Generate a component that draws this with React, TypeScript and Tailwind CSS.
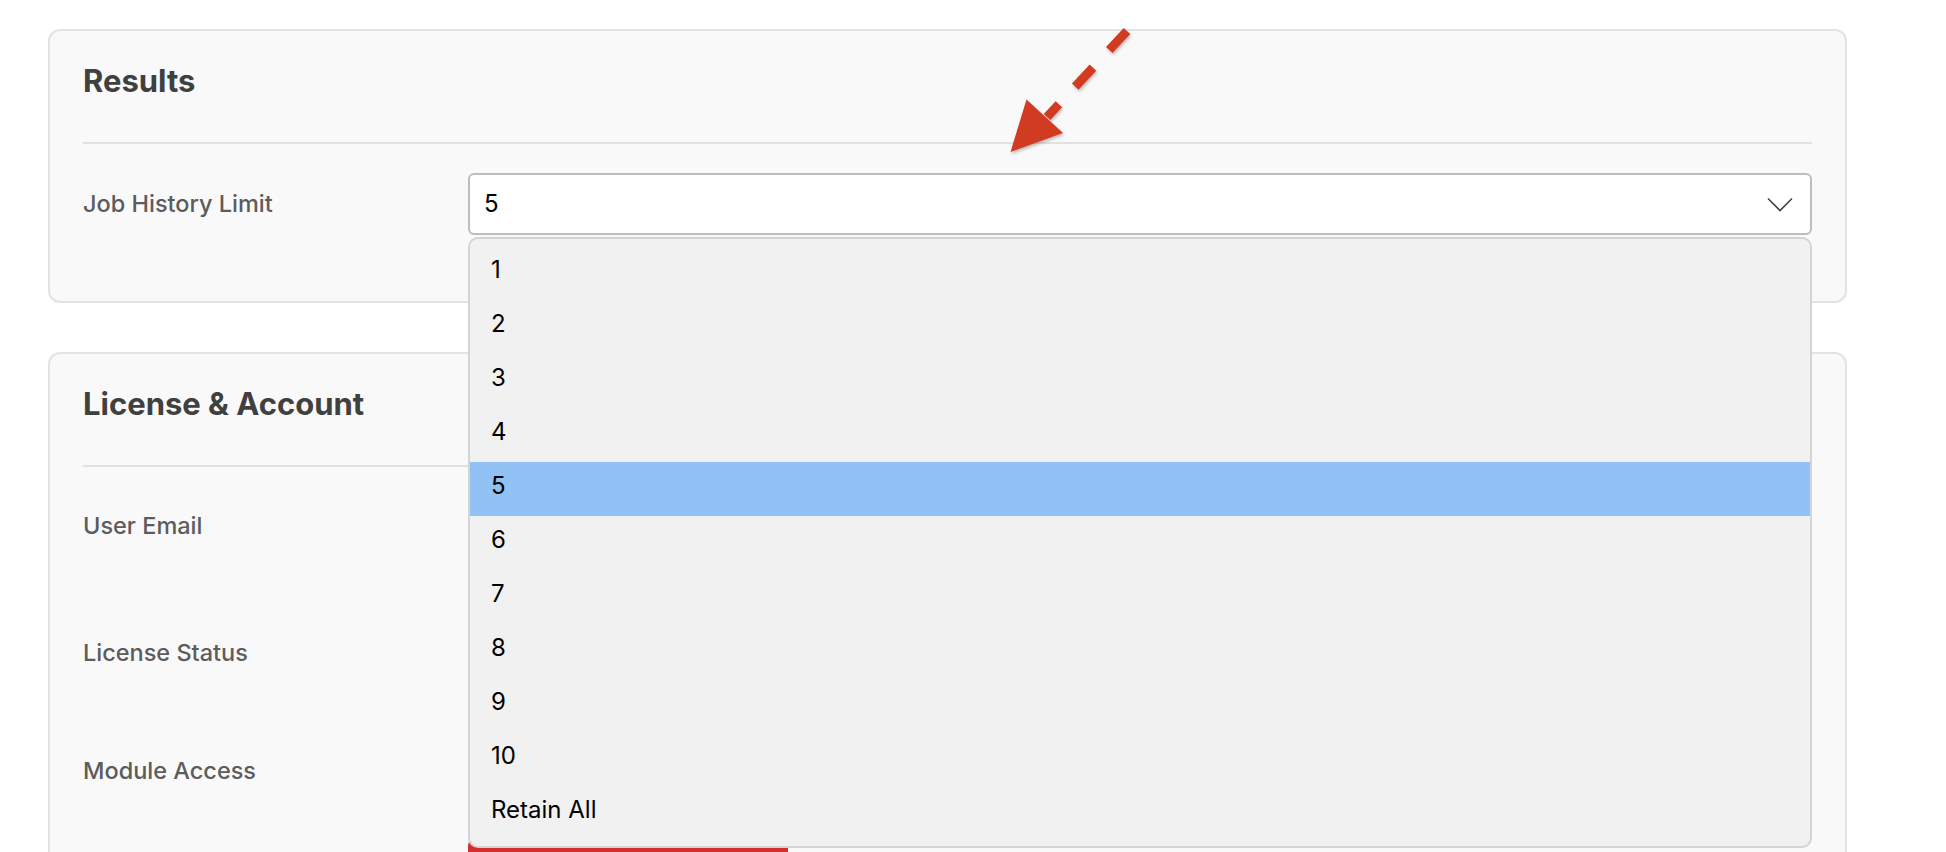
import React from "react";

const options = ["1", "2", "3", "4", "5", "6", "7", "8", "9", "10", "Retain All"];

function Chevron() {
  return (
    <svg width="26" height="15" viewBox="0 0 26 15" fill="none">
      <path d="M1 1.5 L13 13.5 L25 1.5" stroke="#444" strokeWidth="1.6" strokeLinejoin="miter" />
    </svg>
  );
}

function SectionTitle({ children }: { children: React.ReactNode }) {
  return (
    <>
      <h2 className="text-[31px] leading-[40px] font-bold text-[#404040]">{children}</h2>
      <div className="mt-[41px] h-[2px] bg-[#e1e1e1]" />
    </>
  );
}

function Label({ children }: { children: React.ReactNode }) {
  return <span className="w-[385px] shrink-0 text-[23.5px] font-medium text-[#5c5c5c]">{children}</span>;
}

/** Arrow annotation drawn on top of the screenshot. */
function Arrow() {
  return (
    <svg className="pointer-events-none absolute left-0 top-0 z-30" width="1946" height="852" viewBox="0 0 1946 852">
      <defs>
        <filter id="sh" x="-20%" y="-20%" width="140%" height="140%">
          <feDropShadow dx="1" dy="2" stdDeviation="1.5" floodColor="#000" floodOpacity="0.25" />
        </filter>
      </defs>
      <g filter="url(#sh)">
        <path d="M1127 31 L1047 117" stroke="#d13b21" strokeWidth="9" strokeDasharray="26 24" fill="none" />
        <polygon points="1010.5,152 1026.5,99.5 1063,133" fill="#d13b21" />
      </g>
    </svg>
  );
}

export default function App() {
  return (
    <div className="relative h-[852px] w-[1946px] overflow-hidden bg-white font-['Inter','Noto_Sans',sans-serif]">
      <div className="ml-[48px] flex w-[1799px] flex-col gap-[49px] pt-[29px]">
        {/* Results */}
        <section className="relative z-10 rounded-[12px] border-2 border-[#e3e3e3] bg-[#f9f9f9] px-[33px] pb-[66px] pt-[30px]">
          <SectionTitle>Results</SectionTitle>
          <div className="mt-[29px] flex items-center">
            <Label>Job History Limit</Label>
            <div className="relative flex-1">
              <div className="flex h-[62px] items-center justify-between rounded-[6px] border-2 border-[#bdbdbd] bg-white pl-[14px] pr-[17px] text-[24px] text-black">
                <span>5</span>
                <Chevron />
              </div>
              <ul className="absolute left-0 right-0 top-[64px] rounded-[10px] border-2 border-[#d4d4d4] bg-[#f1f1f1] pb-[6px] pt-[7px] text-[24px] text-black">
                {options.map((o) => (
                  <li
                    key={o}
                    className={`h-[54px] pb-[6px] pl-[21px] leading-[48px] ${o === "5" ? "bg-[#90c2f6]" : ""}`}
                  >
                    {o}
                  </li>
                ))}
              </ul>
            </div>
          </div>
        </section>

        {/* License & Account */}
        <section className="rounded-[12px] border-2 border-[#e3e3e3] bg-[#f9f9f9] px-[33px] pb-[60px] pt-[30px]">
          <SectionTitle>License &amp; Account</SectionTitle>
          <div className="mt-[28px] flex items-center">
            <Label>User Email</Label>
            <div className="h-[62px] flex-1 rounded-[6px] border-2 border-[#bdbdbd] bg-white" />
          </div>
          <div className="mt-[65px] flex items-center">
            <Label>License Status</Label>
            <div className="h-[62px] flex-1 rounded-[6px] border-2 border-[#bdbdbd] bg-white" />
          </div>
          <div className="mt-[64px] flex items-center">
            <Label>Module Access</Label>
            <div className="h-[46px] w-[200px] rounded-full bg-[#3cae5a]" />
          </div>
          <div className="mt-[44px] flex">
            <span className="w-[385px] shrink-0" />
            <div className="h-[50px] w-[320px] rounded-[8px] bg-[#d32f2f]" />
          </div>
        </section>
      </div>
      <Arrow />
    </div>
  );
}
